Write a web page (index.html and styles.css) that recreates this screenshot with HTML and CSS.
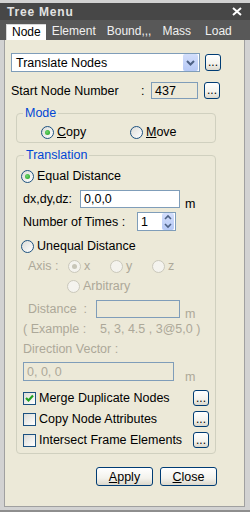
FILE: index.html
```html
<!DOCTYPE html>
<html lang="en">
<head>
  <meta charset="UTF-8">
  <meta name="viewport" content="width=device-width, initial-scale=1.0">
  <title>Tree Menu</title>
  <link rel="stylesheet" href="styles.css">
</head>
<body>
  <div class="window">
    <div class="titlebar">
      <span class="title">Tree Menu</span>
      <svg class="close" width="10" height="9" viewBox="0 0 10 9"><path d="M1 1 L9 8 M9 1 L1 8" stroke="#fff" stroke-width="2" fill="none"/></svg>
    </div>
    <div class="tabs">
      <span class="tab active">Node</span>
      <span class="tab">Element</span>
      <span class="tab">Bound,,,</span>
      <span class="tab">Mass</span>
      <span class="tab last">Load</span>
    </div>

    <div class="panel">
      <div class="row cmd-row">
        <div class="select">
          <span>Translate Nodes</span>
          <span class="drop-btn">
            <svg width="15" height="17" viewBox="0 0 15 17"><path d="M4 7 L7.5 10.5 L11 7" stroke="#4d6185" stroke-width="2" fill="none"/></svg>
          </span>
        </div>
        <button class="dots">...</button>
      </div>

      <div class="row start-row">
        <span class="start-label">Start Node Number</span>
        <span class="colon">:</span>
        <span class="field disabled start-field">437</span>
        <button class="dots">...</button>
      </div>

      <fieldset class="group mode">
        <legend>Mode</legend>
        <div class="line mode-line">
          <span class="opt copy-opt"><span class="radio on"></span><span><u>C</u>opy</span></span>
          <span class="opt"><span class="radio"></span><span><u>M</u>ove</span></span>
        </div>
      </fieldset>

      <fieldset class="group translation">
        <legend>Translation</legend>

        <div class="line radio-line equal-line">
          <span class="opt"><span class="radio on"></span><span>Equal Distance</span></span>
        </div>

        <div class="line dx-line">
          <span class="dx-label">dx,dy,dz:</span>
          <span class="field dx-field">0,0,0</span>
          <span class="unit">m</span>
        </div>

        <div class="line num-line">
          <span class="num-label">Number of Times :</span>
          <span class="spin">
            <span class="spin-val">1</span>
            <span class="spin-btns">
              <svg width="12" height="17" viewBox="0 0 12 17"><path d="M3 6 L6 3 L9 6 M3 11 L6 14 L9 11" stroke="#4d6185" stroke-width="1.6" fill="none"/></svg>
            </span>
          </span>
        </div>

        <div class="line radio-line unequal-line">
          <span class="opt"><span class="radio"></span><span>Unequal Distance</span></span>
        </div>

        <div class="line axis-line dim">
          <span class="axis-label">Axis :</span>
          <span class="opt axis-opt"><span class="radio dis on"></span><span>x</span></span>
          <span class="opt axis-opt"><span class="radio dis"></span><span>y</span></span>
          <span class="opt"><span class="radio dis"></span><span>z</span></span>
        </div>

        <div class="line arb-line dim">
          <span class="opt"><span class="radio dis"></span><span>Arbitrary</span></span>
        </div>

        <div class="line dist-line dim">
          <span class="dist-label">Distance&nbsp;&nbsp;:</span>
          <span class="field disabled dist-field"></span>
          <span class="unit">m</span>
        </div>

        <div class="line example-line dim">( Example :&nbsp;&nbsp;&nbsp;&nbsp;5, 3, 4.5 , 3@5,0 )</div>

        <div class="line dir-line dim">Direction Vector :</div>

        <div class="line dirfield-line dim">
          <span class="field disabled dir-field">0, 0, 0</span>
          <span class="unit">m</span>
        </div>

        <div class="line check-line first">
          <span class="check on">
            <svg width="11" height="11" viewBox="0 0 11 11"><path d="M2 5 L4.5 7.5 L9 2.5" stroke="#21a121" stroke-width="2.2" fill="none"/></svg>
          </span>
          <span class="check-text">Merge Duplicate Nodes</span>
          <button class="dots">...</button>
        </div>
        <div class="line check-line">
          <span class="check"></span>
          <span class="check-text">Copy Node Attributes</span>
          <button class="dots">...</button>
        </div>
        <div class="line check-line">
          <span class="check"></span>
          <span class="check-text">Intersect Frame Elements</span>
          <button class="dots">...</button>
        </div>
      </fieldset>

      <div class="actions">
        <button class="btn"><u>A</u>pply</button>
        <button class="btn"><u>C</u>lose</button>
      </div>
    </div>
  </div>
</body>
</html>
```

FILE: styles.css
```css
* {
  box-sizing: border-box;
}
body {
  margin: 0;
  font-family: 'Liberation Sans', Arial, sans-serif;
  font-size: 12.5px;
  color: #000;
  background: #cfcfcf;
}
.window {
  width: 250px;
  height: 512px;
  padding-top: 3px;
  background: #d2d2d2;
  border-bottom: 2px solid #8e8e8e;
  overflow: hidden;
}
.titlebar {
  height: 17px;
  background: #474747;
  display: flex;
  align-items: center;
  justify-content: space-between;
  padding: 0 8px 0 7px;
}
.title {
  color: #e2e2e2;
  font-size: 12px;
  font-weight: bold;
  letter-spacing: 0.8px;
}
.close {
  display: block;
}
.tabs {
  height: 20px;
  background: #585858;
  display: flex;
  align-items: flex-end;
  padding-left: 6px;
  font-size: 12px;
}
.tab {
  height: 16px;
  line-height: 15px;
  padding: 0 5px 0 6px;
  color: #f0f0f0;
}
.tab.active {
  background: #fff;
  color: #000;
  border-top: 1px solid #d8d8d8;
  border-left: 1px solid #d8d8d8;
  padding-left: 5px;
}
.tab.last {
  margin-left: 3px;
}
.panel {
  height: 467px;
  margin: 0 5px 0 4px;
  background: #ece9d8;
  border: 1px solid #a0a0a0;
  border-top: none;
  padding: 13px 0 0 6px;
}
.row {
  display: flex;
  align-items: center;
}
.cmd-row {
  height: 19px;
  gap: 5px;
}
.select {
  width: 189px;
  height: 19px;
  border: 1px solid #7f9db9;
  background: #fff;
  display: flex;
  align-items: center;
  padding-left: 4px;
}
.drop-btn {
  margin-left: auto;
  margin-right: 1px;
  width: 15px;
  height: 17px;
  background: linear-gradient(#d3defb, #b6c9f6);
  border-radius: 2px;
}
.drop-btn svg, .spin-btns svg {
  display: block;
}
.dots {
  width: 16px;
  height: 17px;
  padding: 0;
  border: 1px solid #003c74;
  border-radius: 3px;
  background: linear-gradient(#ffffff, #f3f2ec 60%, #dcd8cc);
  font-family: inherit;
  font-size: 12px;
  line-height: 15px;
  color: #000;
  flex-shrink: 0;
}
.start-row {
  height: 17px;
  margin-top: 10px;
}
.start-label {
  width: 130px;
}
.colon {
  width: 10px;
}
.field {
  height: 18px;
  border: 1px solid #7f9db9;
  background: #fff;
  padding-left: 3px;
  display: flex;
  align-items: center;
}
.field.disabled {
  background: #ece9d8;
}
.start-field {
  width: 47px;
  height: 17px;
  margin-right: 6px;
}
.group {
  width: 200px;
  margin: 0 0 0 5px;
  padding: 0;
  border: 1px solid #d0d0bf;
  border-radius: 4px;
}
.group legend {
  color: #0046d5;
  line-height: 14px;
  padding: 0 2px;
  margin-left: 6px;
}
.mode {
  margin-top: 7px;
  padding-bottom: 3px;
}
.translation {
  margin-top: 5px;
  padding-bottom: 5px;
}
.translation legend {
  margin-left: 7px;
}
.line {
  display: flex;
  align-items: center;
  height: 14px;
}
.opt {
  display: flex;
  align-items: center;
  gap: 3px;
}
.radio {
  width: 13px;
  height: 13px;
  border: 1px solid #1c5180;
  border-radius: 50%;
  background: linear-gradient(135deg, #dcdcd7, #ffffff);
  position: relative;
  flex-shrink: 0;
}
.radio.on::after {
  content: '';
  position: absolute;
  left: 3px;
  top: 3px;
  width: 5px;
  height: 5px;
  border-radius: 50%;
  background: radial-gradient(circle at 40% 40%, #6fd86f, #1d9a1d);
}
.radio.dis {
  border-color: #cac8bb;
  background: #f4f3ee;
}
.radio.dis.on::after {
  background: #c8c6b8;
}
.mode-line {
  margin-top: 5px;
  padding-left: 24px;
}
.copy-opt {
  width: 89px;
}
.radio-line {
  padding-left: 4px;
}
.equal-line {
  margin-top: 7px;
}
.dx-line {
  height: 18px;
  margin-top: 7px;
  padding-left: 6px;
}
.dx-label {
  width: 57px;
}
.dx-field {
  width: 100px;
}
.unit {
  margin-left: 5px;
  align-self: flex-end;
  line-height: 12px;
  position: relative;
  top: 2px;
}
.num-line {
  height: 19px;
  margin-top: 4px;
  padding-left: 6px;
}
.num-label {
  width: 114px;
}
.spin {
  width: 39px;
  height: 19px;
  border: 1px solid #7f9db9;
  background: #fff;
  display: flex;
  align-items: center;
  padding-left: 3px;
}
.spin-btns {
  margin-left: auto;
  margin-right: 1px;
  width: 12px;
  height: 17px;
  background: linear-gradient(#d3defb, #b6c9f6);
  border-radius: 2px;
}
.unequal-line {
  margin-top: 8px;
}
.dim {
  color: #aca899;
}
.axis-line {
  margin-top: 6px;
  padding-left: 11px;
}
.axis-label {
  width: 40px;
}
.axis-opt {
  width: 42px;
}
.arb-line {
  margin-top: 6px;
  padding-left: 50px;
}
.dist-line {
  height: 18px;
  margin-top: 7px;
  padding-left: 11px;
}
.dist-label {
  width: 68px;
}
.dist-field {
  width: 84px;
}
.example-line {
  margin-top: 4px;
  padding-left: 6px;
}
.dir-line {
  margin-top: 6px;
  padding-left: 6px;
}
.dirfield-line {
  height: 19px;
  margin-top: 6px;
  padding-left: 6px;
}
.dir-field {
  width: 151px;
  height: 19px;
}
.dirfield-line .unit {
  margin-left: 11px;
}
.check-line {
  height: 16px;
  width: 192px;
  margin-top: 5px;
  padding-left: 6px;
}
.check-line.first {
  margin-top: 9px;
}
.check {
  width: 13px;
  height: 13px;
  border: 1px solid #1c5180;
  background: linear-gradient(135deg, #dcdcd7, #ffffff);
  flex-shrink: 0;
}
.check svg {
  display: block;
}
.check-text {
  margin-left: 3px;
}
.check-line .dots {
  margin-left: auto;
  height: 16px;
  line-height: 14px;
}
.actions {
  display: flex;
  gap: 7px;
  margin-top: 13px;
  padding-left: 85px;
}
.btn {
  width: 57px;
  height: 19px;
  padding: 0;
  border: 1px solid #003c74;
  border-radius: 3px;
  background: linear-gradient(#ffffff, #f3f2ec 60%, #dcd8cc);
  font-family: inherit;
  font-size: 12.5px;
  color: #000;
}
```
